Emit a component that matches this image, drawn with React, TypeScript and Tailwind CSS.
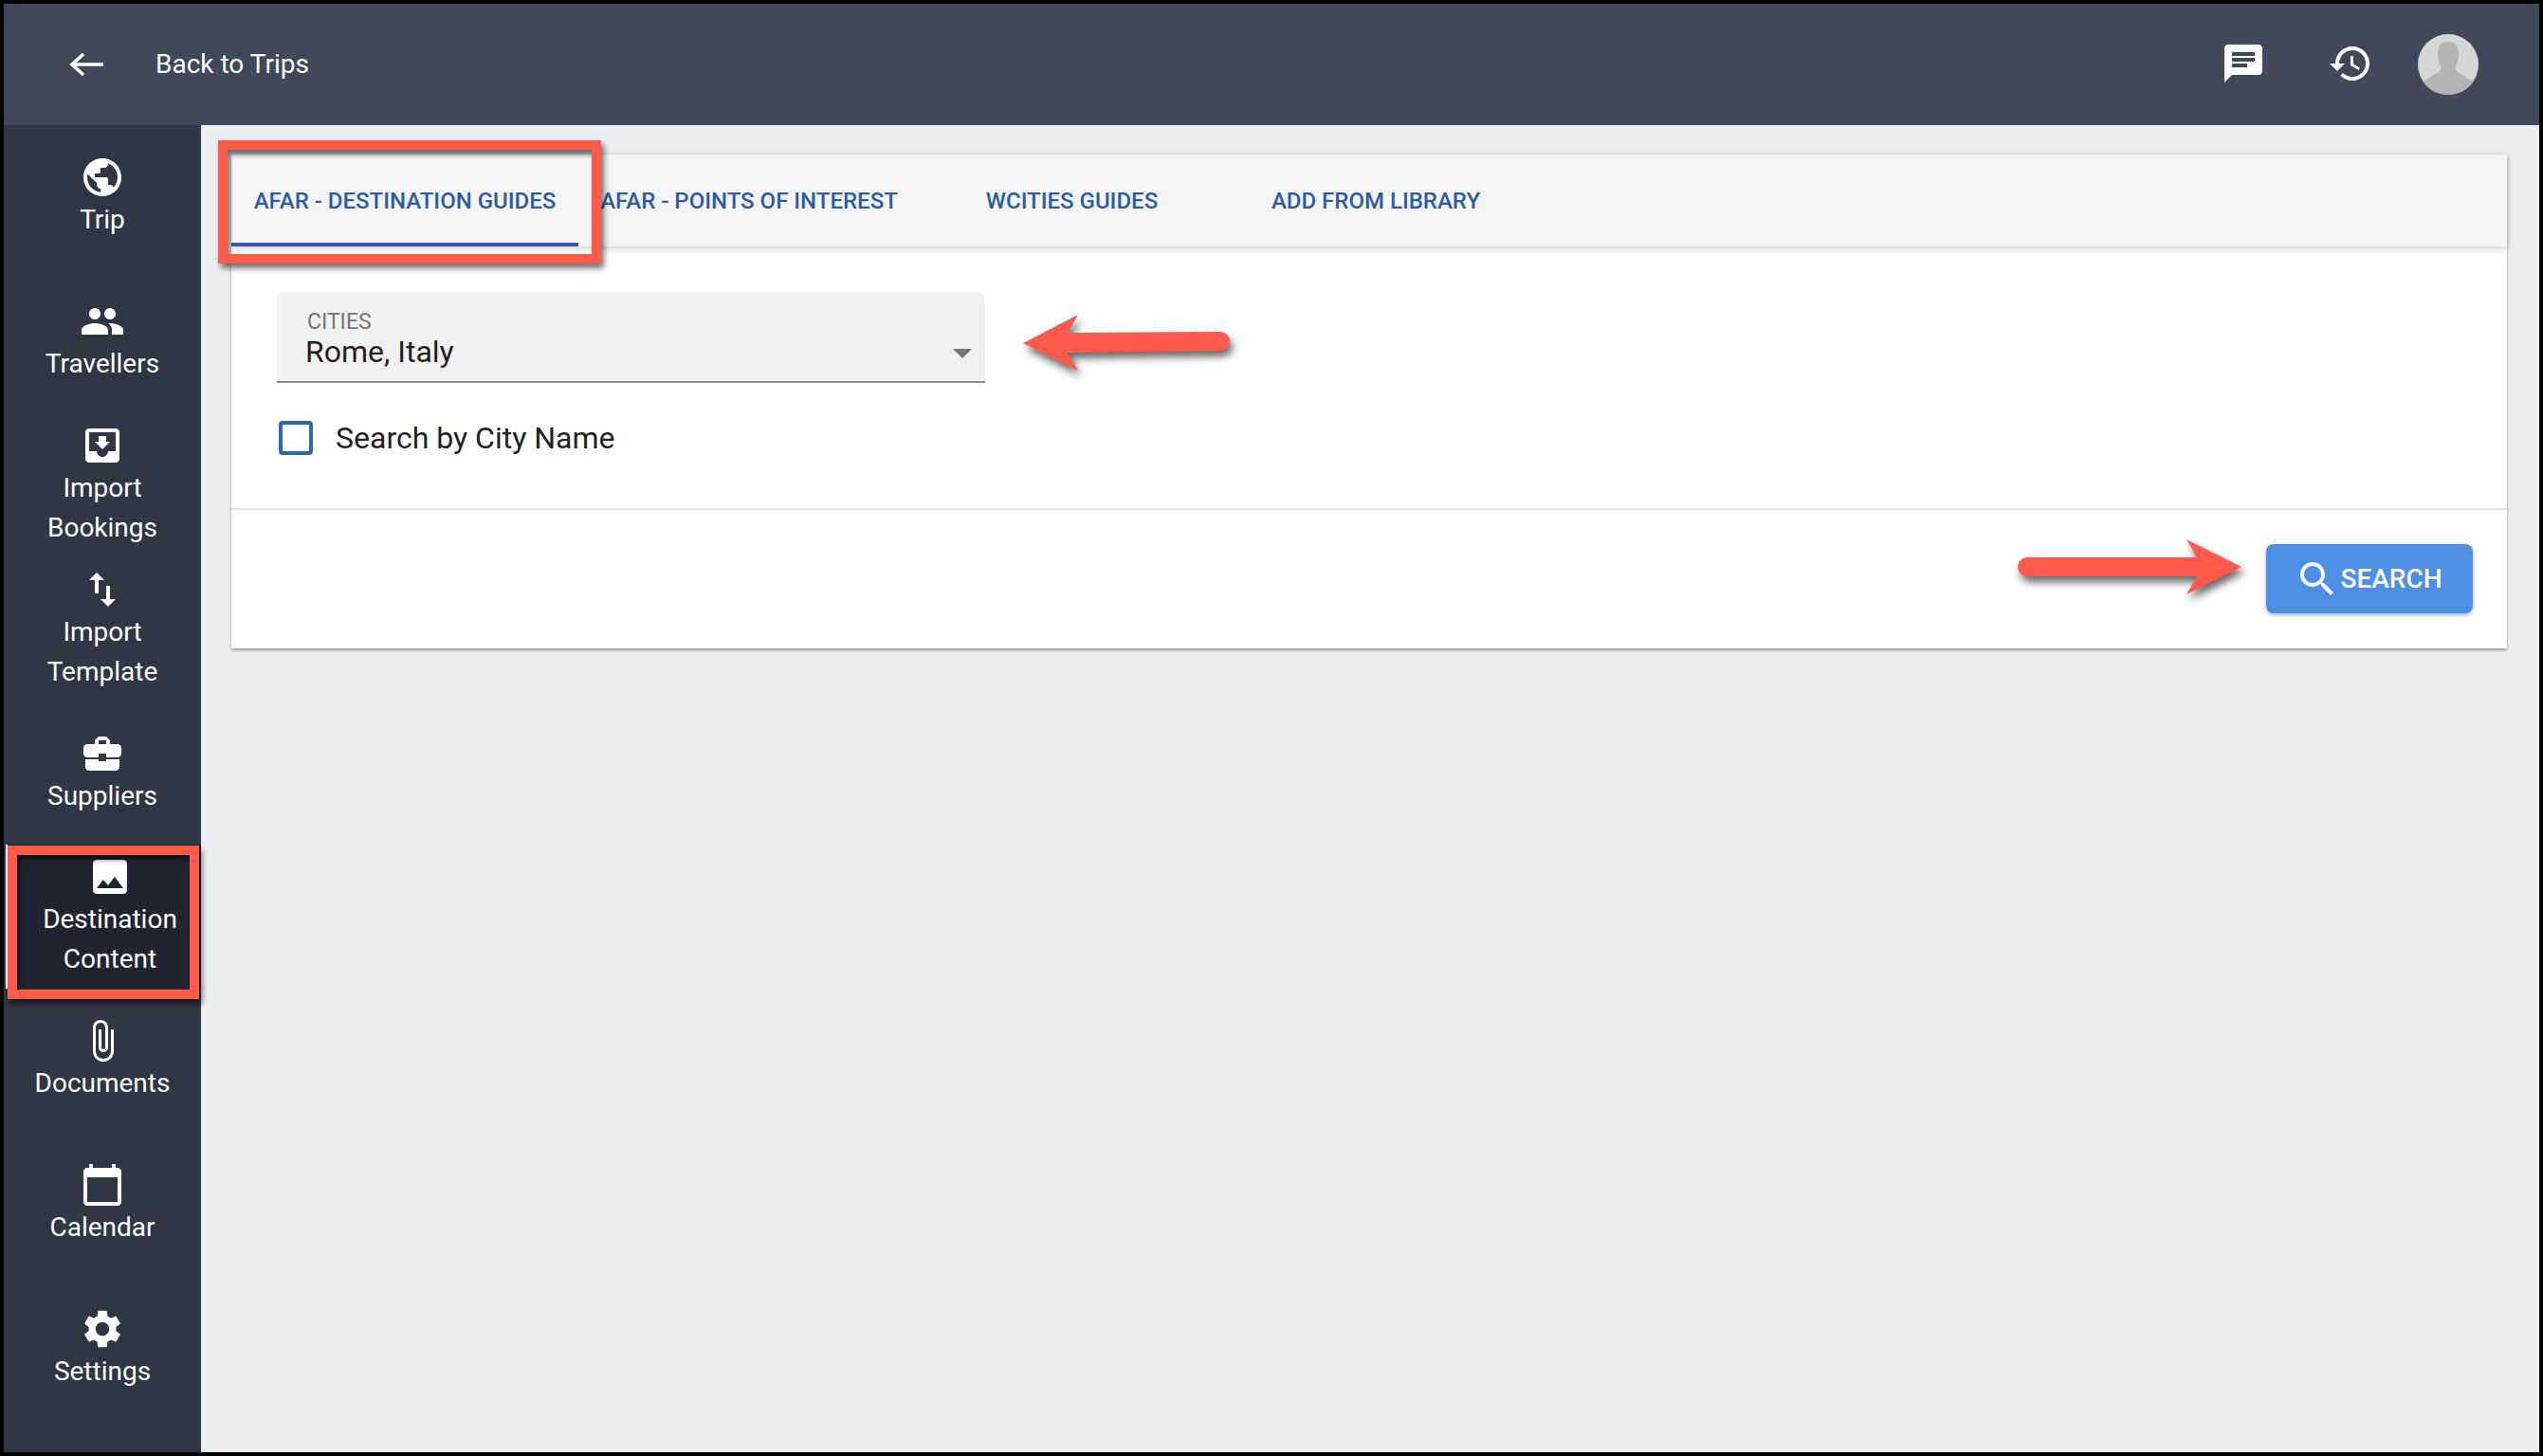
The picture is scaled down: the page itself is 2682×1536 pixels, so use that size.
import type { ReactNode } from "react";

const P = {
  globe: "M12 2C6.48 2 2 6.48 2 12s4.48 10 10 10 10-4.48 10-10S17.52 2 12 2zm-1 17.93c-3.95-.49-7-3.85-7-7.93 0-.62.08-1.21.21-1.79L9 15v1c0 1.1.9 2 2 2v1.93zm6.9-2.54c-.26-.81-1-1.39-1.9-1.39h-1v-3c0-.55-.45-1-1-1H8v-2h2c.55 0 1-.45 1-1V7h2c1.1 0 2-.9 2-2v-.41c2.93 1.19 5 4.06 5 7.41 0 2.08-.8 3.97-2.1 5.39z",
  people: "M16 11c1.66 0 2.99-1.34 2.99-3S17.66 5 16 5c-1.66 0-3 1.34-3 3s1.34 3 3 3zm-8 0c1.66 0 2.99-1.34 2.99-3S9.66 5 8 5C6.34 5 5 6.34 5 8s1.34 3 3 3zm0 2c-2.33 0-7 1.17-7 3.5V19h14v-2.5c0-2.33-4.67-3.5-7-3.5zm8 0c-.29 0-.62.02-.97.05 1.16.84 1.97 1.97 1.97 3.45V19h6v-2.5c0-2.33-4.67-3.5-7-3.5z",
  inbox: "M19 3H4.99c-1.11 0-1.98.9-1.98 2L3 19c0 1.1.88 2 1.99 2H19c1.1 0 2-.9 2-2V5c0-1.1-.9-2-2-2zm0 12h-4c0 1.66-1.35 3-3 3s-3-1.34-3-3H4.99V5H19v10zm-3-5h-2V7h-4v3H8l4 4 4-4z",
  swap: "M9 3L5 6.99h3V14h2V6.99h3L9 3zm7 14.01V10h-2v7.01h-3L15 21l4-3.99h-3z",
  case: "M10 16v-1H3.01L3 19c0 1.11.89 2 2 2h14c1.11 0 2-.89 2-2v-4h-7v1h-4zm10-9h-4.01V5l-2-2h-4l-2 2v2H4c-1.1 0-2 .9-2 2v3c0 1.11.89 2 2 2h6v-2h4v2h6c1.1 0 2-.9 2-2V9c0-1.1-.9-2-2-2zm-6 0h-4V5h4v2z",
  image: "M21 19V5c0-1.1-.9-2-2-2H5c-1.1 0-2 .9-2 2v14c0 1.1.9 2 2 2h14c1.1 0 2-.9 2-2zM8.5 13.5l2.5 3.01L14.5 12l4.5 6H5l3.5-4.5z",
  clip: "M16.5 6v11.5c0 2.21-1.79 4-4 4s-4-1.79-4-4V5c0-1.38 1.12-2.5 2.5-2.5s2.5 1.12 2.5 2.5v10.5c0 .55-.45 1-1 1s-1-.45-1-1V6H10v9.5c0 1.38 1.12 2.5 2.5 2.5s2.5-1.12 2.5-2.5V5c0-2.21-1.79-4-4-4S7 2.79 7 5v12.5c0 3.04 2.46 5.5 5.5 5.5s5.5-2.46 5.5-5.5V6h-1.5z",
  calendar: "M20 3h-1V1h-2v2H7V1H5v2H4c-1.1 0-2 .9-2 2v16c0 1.1.9 2 2 2h16c1.1 0 2-.9 2-2V5c0-1.1-.9-2-2-2zm0 18H4V8h16v13z",
  gear: "M19.14 12.94c.04-.3.06-.61.06-.94 0-.32-.02-.64-.07-.94l2.03-1.58c.18-.14.23-.41.12-.61l-1.92-3.32c-.12-.22-.37-.29-.59-.22l-2.39.96c-.5-.38-1.03-.7-1.62-.94l-.36-2.54c-.04-.24-.24-.41-.48-.41h-3.84c-.24 0-.43.17-.47.41l-.36 2.54c-.59.24-1.13.57-1.62.94l-2.39-.96c-.22-.08-.47 0-.59.22L2.74 8.87c-.12.21-.08.47.12.61l2.03 1.58c-.05.3-.09.63-.09.94s.02.64.07.94l-2.03 1.58c-.18.14-.23.41-.12.61l1.92 3.32c.12.22.37.29.59.22l2.39-.96c.5.38 1.03.7 1.62.94l.36 2.54c.05.24.24.41.48.41h3.84c.24 0 .44-.17.47-.41l.36-2.54c.59-.24 1.13-.56 1.62-.94l2.39.96c.22.08.47 0 .59-.22l1.92-3.32c.12-.22.07-.47-.12-.61l-2.01-1.58zM12 15.6c-1.98 0-3.6-1.62-3.6-3.6s1.62-3.6 3.6-3.6 3.6 1.62 3.6 3.6-1.62 3.6-3.6 3.6z",
  chat: "M20 2H4c-1.1 0-1.99.9-1.99 2L2 22l4-4h14c1.1 0 2-.9 2-2V4c0-1.1-.9-2-2-2zM6 9h12v2H6V9zm8 5H6v-2h8v2zm4-6H6V6h12v2z",
  history: "M13 3c-4.97 0-9 4.03-9 9H1l3.89 3.89.07.14L9 12H6c0-3.87 3.13-7 7-7s7 3.13 7 7-3.13 7-7 7c-1.93 0-3.68-.79-4.94-2.06l-1.42 1.42C8.27 19.99 10.51 21 13 21c4.97 0 9-4.03 9-9s-4.03-9-9-9zm-1 5v5l4.28 2.54.72-1.21-3.5-2.08V8H12z",
  search: "M15.5 14h-.79l-.28-.27C15.41 12.59 16 11.11 16 9.5 16 5.91 13.09 3 9.5 3S3 5.91 3 9.5 5.91 16 9.5 16c1.61 0 3.09-.59 4.23-1.57l.27.28v.79l5 4.99L20.49 19l-4.99-5zm-6 0C7.01 14 5 11.99 5 9.5S7.01 5 9.5 5 14 7.01 14 9.5 11.99 14 9.5 14z",
};

function Icon({ d, className }: { d: string; className?: string }) {
  return (
    <svg viewBox="0 0 24 24" className={className} fill="currentColor" fillRule="evenodd">
      <path d={d} />
    </svg>
  );
}

function NavItem({ d, children, active }: { d: string; children: ReactNode; active?: boolean }) {
  return (
    <div
      className={
        active
          ? "h-[151.9px] ml-[2px] pl-[12px] flex flex-col items-center justify-center bg-[#21242f] border-l-[2px] border-white text-white"
          : "h-[151.9px] flex flex-col items-center justify-center text-white"
      }
    >
      <Icon d={d} className="w-[48px] h-[48px] shrink-0" />
      <div className="text-center text-[28px] leading-[42px]">{children}</div>
    </div>
  );
}

function Tab({ children, className }: { children: ReactNode; className: string }) {
  return (
    <div className={"h-full flex items-center justify-center border-y-[4px] text-[24px] font-medium text-[#2a5ca8] uppercase whitespace-nowrap " + className}>
      {children}
    </div>
  );
}

export default function App() {
  return (
    <div className="relative w-[2682px] h-[1536px] overflow-hidden bg-black p-[4px] font-['Roboto',sans-serif]">
      <div className="w-full h-full flex flex-col bg-[#edeef0]">
        <header className="h-[128px] shrink-0 bg-[#424859] flex items-center justify-between text-white">
          <div className="flex items-center">
            <svg viewBox="0 0 36 24" className="ml-[69px] w-[36px] h-[24px]" fill="none" stroke="currentColor" strokeWidth="3.5">
              <path d="M36 12H3M15 1L3 12l12 11" />
            </svg>
            <span className="ml-[55px] text-[28px]">Back to Trips</span>
          </div>
          <div className="flex items-center pr-[64px]">
            <Icon d={P.chat} className="w-[48px] h-[48px] -mt-[2px]" />
            <Icon d={P.history} className="ml-[65px] w-[48px] h-[48px] -mt-[2px]" />
            <svg viewBox="0 0 64 64" className="ml-[47px] w-[64px] h-[64px]">
              <clipPath id="avatar-clip"><circle cx="32" cy="32" r="32" /></clipPath>
              <g clipPath="url(#avatar-clip)">
                <rect width="64" height="64" fill="#d6d6d6" />
                <path d="M32 8c-9 0-11 7-11 14 0 5 2 9 3 12 1 4-1 6-4 7L6 50l6 16h40l6-16-14-9c-3-1-5-3-4-7 1-3 3-7 3-12 0-7-2-14-11-14z" fill="#b3b3b3" />
              </g>
            </svg>
          </div>
        </header>

        <div className="flex-1 flex min-h-0">
          <nav className="w-[208px] shrink-0 bg-[#313645]">
            <NavItem d={P.globe}>Trip</NavItem>
            <NavItem d={P.people}>Travellers</NavItem>
            <NavItem d={P.inbox}>Import<br />Bookings</NavItem>
            <NavItem d={P.swap}>Import<br />Template</NavItem>
            <NavItem d={P.case}>Suppliers</NavItem>
            <NavItem d={P.image} active>Destination<br />Content</NavItem>
            <NavItem d={P.clip}>Documents</NavItem>
            <NavItem d={P.calendar}>Calendar</NavItem>
            <NavItem d={P.gear}>Settings</NavItem>
          </nav>

          <main className="flex-1 pl-[32px] pr-[34px] pt-[31px]">
            <div className="bg-white shadow-[0_2px_3px_rgba(0,0,0,0.35)]">
              <div className="h-[97px] bg-[#f5f5f5] flex shadow-[0_2px_8px_rgba(0,0,0,0.2)] relative">
                <Tab className="w-[366px] border-t-transparent border-b-[#3f51b5]">AFAR - Destination Guides</Tab>
                <Tab className="w-[360px] border-transparent">AFAR - Points of Interest</Tab>
                <Tab className="w-[321px] border-transparent">WCities Guides</Tab>
                <Tab className="w-[320px] border-transparent">Add from Library</Tab>
              </div>
              <div className="h-[278px] border-b-[2px] border-[#e2e2e2] pt-[48px] pl-[48px]">
                <div className="relative w-[747px] h-[96px] rounded-t-[8px] bg-[#f1f1f1] border-b-[2px] border-[#8c8c8c] pl-[32px] pt-[17px]">
                  <div className="text-[23px] leading-[30px] text-[#757575]">CITIES</div>
                  <div className="-ml-[2px] -mt-[2px] text-[32px] leading-[36px] text-[#1f1f1f]">Rome, Italy</div>
                  <div className="absolute right-[14px] top-[60px] w-0 h-0 border-x-[10px] border-x-transparent border-t-[10px] border-t-[#757575]" />
                </div>
                <div className="mt-[34px] ml-[2px] flex items-center">
                  <div className="w-[36px] h-[36px] rounded-[4px] border-[4px] border-[#2f66a8]" />
                  <span className="ml-[24px] text-[32px] text-[#212121]">Search by City Name</span>
                </div>
              </div>
              <div className="h-[146px] flex justify-end pt-[36px] pr-[36px]">
                <button className="w-[218px] h-[73px] rounded-[8px] bg-[#4d8fe3] text-white flex items-center justify-center pl-[6px] shadow-[0_2px_4px_rgba(0,0,0,0.3)]">
                  <Icon d={P.search} className="w-[48px] h-[48px] -ml-[8px]" />
                  <span className="text-[28px] font-medium">SEARCH</span>
                </button>
              </div>
            </div>
          </main>
        </div>
      </div>

      {/* callouts drawn on top of the screenshot */}
      <div className="absolute left-[230px] top-[148px] w-[404px] h-[130px] border-[10px] border-[#ff5a4c] shadow-[3px_5px_6px_rgba(0,0,0,0.55),inset_2px_5px_5px_rgba(0,0,0,0.55)]" />
      <div className="absolute left-[8px] top-[892px] w-[202px] h-[162px] border-[10px] border-[#ff5a4c] shadow-[3px_5px_6px_rgba(0,0,0,0.55),inset_2px_5px_5px_rgba(0,0,0,0.55)]" />
      <svg className="absolute left-[1068px] top-[320px] w-[250px] h-[90px] drop-shadow-[3px_6px_4px_rgba(0,0,0,0.6)]" viewBox="0 0 250 90">
        <path d="M11 42L69 12L58 31L219 30a10 10 0 0 1 0 20L58 52L69 71z" fill="#ff5a4c" />
      </svg>
      <svg className="absolute left-[2120px] top-[560px] w-[256px] h-[80px] drop-shadow-[3px_6px_4px_rgba(0,0,0,0.6)]" viewBox="0 0 256 80">
        <path d="M18 28H197L186 9L244 38L186 67L197 48H18a10 10 0 0 1 0-20z" fill="#ff5a4c" />
      </svg>
    </div>
  );
}
